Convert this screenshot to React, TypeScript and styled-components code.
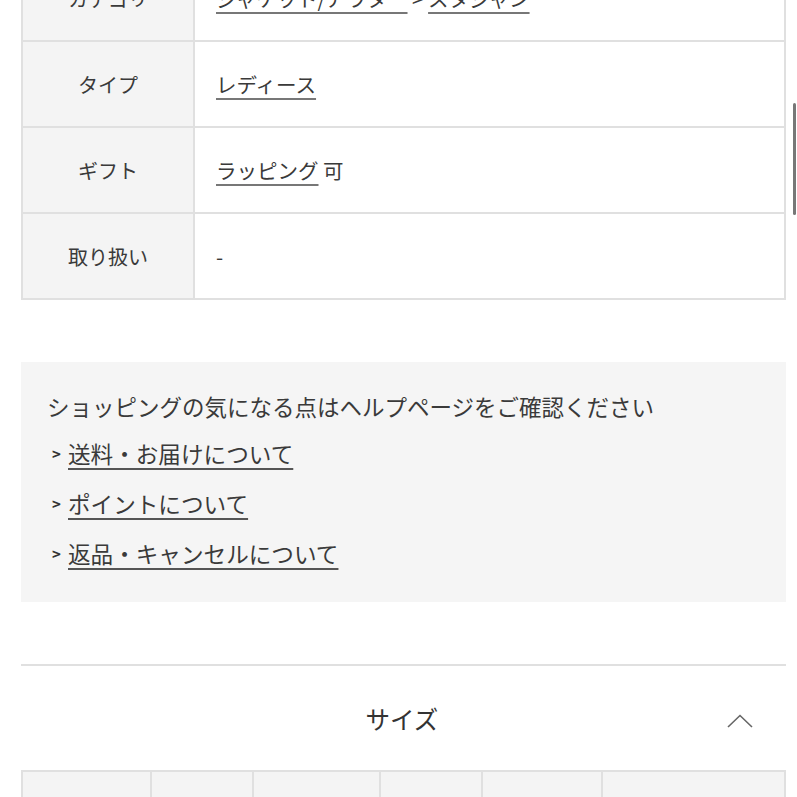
import React from "react";
import styled, { createGlobalStyle } from "styled-components";

const line = "#e0e0e0";
const text = "#3a3a3a";
const labelBg = "#f4f4f4";
const font = `"Noto Sans CJK JP", "Noto Sans", sans-serif`;

const specs = [
  { label: "カテゴリ", value: [["ジャケット/アウター", true], [" > ", false], ["スタジャン", true]] },
  { label: "タイプ", value: [["レディース", true]] },
  { label: "ギフト", value: [["ラッピング", true], [" 可", false]] },
  { label: "取り扱い", value: [["-", false]] }
] as { label: string; value: [string, boolean][] }[];

const helpLinks = ["送料・お届けについて", "ポイントについて", "返品・キャンセルについて"];

const sizeCols = [129, 102, 128, 101, 121, 184];

export default function App() {
  return (
    <Page>
      <GlobalStyle />
      <SpecTable>
        {specs.map(row => (
          <SpecRow key={row.label}>
            <LabelCell>{row.label}</LabelCell>
            <ValueCell>
              {row.value.map(([t, link], i) =>
                link ? <TextLink key={i}>{t}</TextLink> : <Plain key={i}>{t}</Plain>
              )}
            </ValueCell>
          </SpecRow>
        ))}
      </SpecTable>

      <HelpBox>
        <HelpTitle>ショッピングの気になる点はヘルプページをご確認ください</HelpTitle>
        {helpLinks.map(l => (
          <HelpItem key={l}>
            <Arrow>&gt;</Arrow>
            <HelpLink>{l}</HelpLink>
          </HelpItem>
        ))}
      </HelpBox>

      <Accordion>
        <AccordionHead>
          <AccordionTitle>サイズ</AccordionTitle>
          <Chevron width="26" height="14" viewBox="0 0 26 14">
            <polyline points="1,13 13,1.5 25,13" fill="none" stroke="#666" strokeWidth="1.6" />
          </Chevron>
        </AccordionHead>
        <SizeTable>
          {sizeCols.map((w, i) => (
            <SizeCell key={i} style={{ flex: `${w} 0 0` }} />
          ))}
        </SizeTable>
      </Accordion>

      <ScrollThumb />
    </Page>
  );
}

const GlobalStyle = createGlobalStyle`
  body {
    margin: 0;
    background: #fff;
    font-family: ${font};
    color: ${text};
    overflow: hidden;
  }
`;

const Page = styled.div`
  width: 797px;
  height: 797px;
  overflow: hidden;
  padding: 0 11px 0 21px;
  box-sizing: border-box;
`;

const SpecTable = styled.div`
  margin-top: -46px;
  border-top: 2px solid ${line};
  border-left: 2px solid ${line};
`;

const SpecRow = styled.div`
  display: grid;
  grid-template-columns: 172px 1fr;
  height: 86px;
`;

const LabelCell = styled.div`
  display: flex;
  align-items: center;
  justify-content: center;
  background: ${labelBg};
  border-right: 2px solid ${line};
  border-bottom: 2px solid ${line};
  font-size: 20px;
  color: ${text};
`;

const ValueCell = styled.div`
  display: flex;
  align-items: center;
  padding-left: 21px;
  border-right: 2px solid ${line};
  border-bottom: 2px solid ${line};
  font-size: 20.5px;
  white-space: pre;
`;

const TextLink = styled.span`
  text-decoration: underline;
  text-decoration-color: #777;
  text-decoration-thickness: 2px;
  text-underline-offset: 5px;
`;

const Plain = styled.span``;

const HelpBox = styled.div`
  margin-top: 62px;
  height: 240px;
  box-sizing: border-box;
  background: #f5f5f5;
  padding: 26px 26px 0;
  display: flex;
  flex-direction: column;
`;

const HelpTitle = styled.div`
  font-size: 22.5px;
  line-height: 36px;
  margin-bottom: 4px;
`;

const HelpItem = styled.div`
  display: flex;
  align-items: center;
  height: 50px;
  padding-left: 5px;
  font-size: 22.6px;
`;

const Arrow = styled.span`
  font-size: 15px;
  font-weight: 700;
  width: 16px;
  color: #333;
`;

const HelpLink = styled.span`
  text-decoration: underline;
  text-decoration-color: #555;
  text-decoration-thickness: 2px;
  text-underline-offset: 5px;
`;

const Accordion = styled.div`
  margin-top: 62px;
  border-top: 2px solid ${line};
`;

const AccordionHead = styled.div`
  position: relative;
  height: 104px;
  display: flex;
  align-items: center;
  justify-content: center;
`;

const AccordionTitle = styled.div`
  font-size: 24.5px;
  margin-right: 3px;
  color: #333;
`;

const Chevron = styled.svg`
  position: absolute;
  right: 33px;
  top: 48px;
`;

const SizeTable = styled.div`
  display: flex;
  height: 40px;
  border-top: 2px solid ${line};
  border-left: 2px solid ${line};
`;

const SizeCell = styled.div`
  background: ${labelBg};
  border-right: 2px solid ${line};
`;

const ScrollThumb = styled.div`
  position: fixed;
  left: 793px;
  top: 103px;
  width: 3px;
  height: 112px;
  border-radius: 2px;
  background: #777;
`;
